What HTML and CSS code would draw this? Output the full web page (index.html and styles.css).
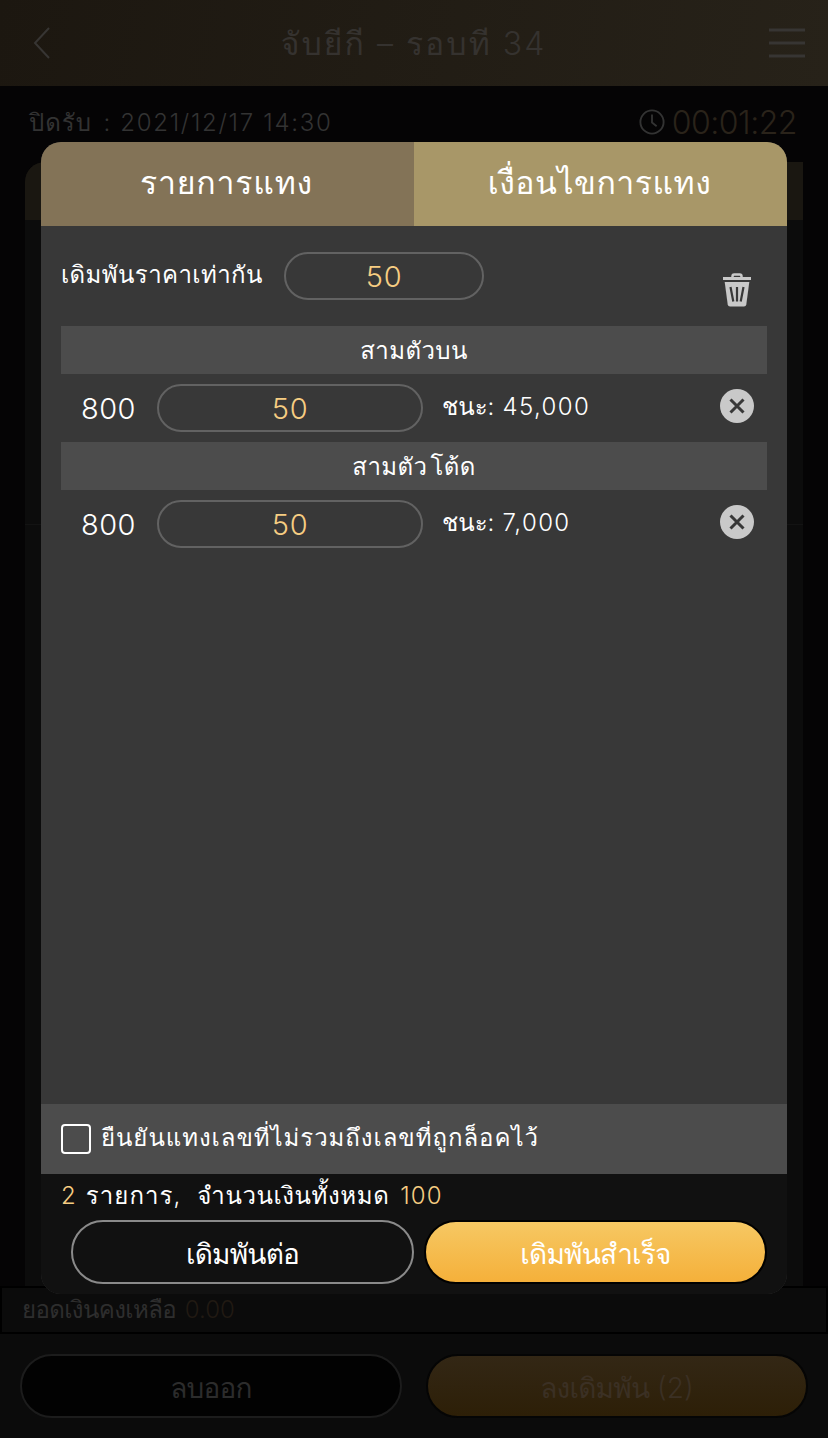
FILE: index.html
```html
<!DOCTYPE html>
<html lang="th">

<head>
    <meta charset="UTF-8">
    <meta name="viewport" content="width=device-width, initial-scale=1.0">
    <title>จับยีกี</title>
    <link rel="stylesheet" href="styles.css">
</head>

<body>
    <div class="page">
        <header class="header">
            <svg class="back" width="20" height="34" viewBox="0 0 20 34"><path d="M17 2 L3 17 L17 32" /></svg>
            <h1 class="title">จับยีกี – รอบที 34</h1>
            <svg class="menu" width="38" height="32" viewBox="0 0 38 32"><path d="M1 3H37M1 16H37M1 29H37" /></svg>
        </header>
        <div class="info">
            <span class="close-time"><span class="close-label">ปิดรับ</span> : 2021/12/17 14:30</span>
            <span class="timer">
                <svg width="26" height="26" viewBox="0 0 28 28"><circle cx="14" cy="14" r="12.5" /><path d="M14 6V14.5L19 18.5" /></svg>
                <span class="countdown">00:01:22</span>
            </span>
        </div>
        <div class="board">
            <div class="board-head"></div>
            <div class="board-row"></div>
        </div>
        <div class="balance"><span class="balance-label">ยอดเงินคงเหลือ</span> <span class="balance-value">0.00</span></div>
        <div class="actions">
            <button class="btn clear"><span>ลบออก</span></button>
            <button class="btn submit"><span>ลงเดิมพัน</span> (2)</button>
        </div>
    </div>

    <div class="modal">
        <div class="tabs">
            <div class="tab active">รายการแทง</div>
            <div class="tab">เงื่อนไขการแทง</div>
        </div>
        <div class="content">
            <div class="same-price">
                <span class="same-label">เดิมพันราคาเท่ากัน</span>
                <div class="input small">50</div>
                <svg class="trash" width="28" height="34" viewBox="0 0 28 34">
                    <path class="handle" d="M9.5 5V3.200Q9.5 1.500 11.200 1.500H16.800Q18.500 1.500 18.500 3.200V5" />
                    <path d="M0 4H28V7H0Z" />
                    <path d="M1.700 9H26.300L23.300 31.500Q23 33.500 21 33.500H7Q5 33.500 4.700 31.500Z" />
                    <path class="slot" d="M7.500 14L10.300 28.500M14 14V28.500M20.500 14L17.700 28.500" />
                </svg>
            </div>
            <div class="group">สามตัวบน</div>
            <div class="bet">
                <span class="number">800</span>
                <div class="input">50</div>
                <span class="win"><span class="win-label">ชนะ:</span> 45,000</span>
                <svg class="remove" width="34" height="34" viewBox="0 0 34 34"><circle cx="17" cy="17" r="17" /><path d="M10.500 10.500L23.500 23.500M23.500 10.500L10.500 23.500" /></svg>
            </div>
            <div class="group">สามตัว<span class="tod">โต้ด</span></div>
            <div class="bet">
                <span class="number">800</span>
                <div class="input">50</div>
                <span class="win"><span class="win-label">ชนะ:</span> 7,000</span>
                <svg class="remove" width="34" height="34" viewBox="0 0 34 34"><circle cx="17" cy="17" r="17" /><path d="M10.500 10.500L23.500 23.500M23.500 10.500L10.500 23.500" /></svg>
            </div>
        </div>
        <div class="confirm">
            <span class="checkbox"></span>
            <span class="confirm-label">ยืนยันแทงเลขที่ไม่รวมถึงเลขที่ถูกล็อคไว้</span>
        </div>
        <div class="footer">
            <div class="summary">
                <span class="gold">2</span>
                <span class="sum-items">รายการ,</span>
                <span class="sum-total">จำนวนเงินทั้งหมด</span>
                <span class="gold">100</span>
            </div>
            <div class="buttons">
                <button class="btn outline"><span>เดิมพันต่อ</span></button>
                <button class="btn primary"><span>เดิมพันสำเร็จ</span></button>
            </div>
        </div>
    </div>
</body>

</html>
```
FILE: styles.css
```css
* {
    box-sizing: border-box;
}

body {
    margin: 0;
    height: 1438px;
    overflow: hidden;
    background-color: #050405;
    font-family: Inter, Loma, "Noto Sans Thai Looped", "Noto Sans", sans-serif;
    font-weight: 350;
    color: #fff;
    white-space: nowrap;
}

svg {
    display: block;
    flex: none;
}

.page {
    height: 1438px;
    display: flex;
    flex-direction: column;
}

/* header */
.header {
    height: 86px;
    flex: none;
    display: flex;
    align-items: center;
    justify-content: space-between;
    padding: 0 22px 0 32px;
    background: linear-gradient(100deg, #1c1710, #272219);
    color: #35322f;
}

.back,
.menu {
    fill: none;
    stroke: #373533;
    stroke-width: 3;
}

.back {
    stroke-width: 2;
}

.title {
    margin: 0 0 0 7px;
    font-size: 32px;
    font-weight: 350;
    letter-spacing: 2px;
}

.info {
    height: 76px;
    flex: none;
    display: flex;
    justify-content: space-between;
    align-items: center;
    padding: 0 31px 3px 29px;
    color: #333;
}

.close-time {
    font-size: 24px;
    letter-spacing: 1.7px;
}

.close-label {
    margin-right: 3px;
    letter-spacing: 1px;
}

.timer {
    display: flex;
    align-items: center;
    gap: 7px;
}

.timer svg {
    margin-bottom: 2px;
    fill: none;
    stroke: #333;
    stroke-width: 2;
}

.countdown {
    font-size: 32px;
    font-weight: 300;
    letter-spacing: -0.5px;
    color: #2a231a;
}

.board {
    flex: 1;
    margin: 0 25px;
    background-color: #0c0c0c;
    border-radius: 20px 0 0 0;
    overflow: hidden;
}

.board-head {
    height: 58px;
    background-color: #1a1711;
}

.board-row {
    height: 305px;
    border-bottom: 1px solid #131313;
}

.balance {
    height: 48px;
    flex: none;
    padding: 0 20px;
    border: 2px solid #000;
    background-color: #0b0b0b;
    font-size: 24px;
    line-height: 44px;
    color: #2e2e2e;
}

.balance-label {
    margin-right: 2px;
    letter-spacing: -0.6px;
}

.balance-value {
    color: #211a13;
}

.actions {
    height: 104px;
    flex: none;
    display: flex;
    gap: 24px;
    padding: 20px 20px 0;
    background-color: #0b0b0b;
}

.btn {
    height: 64px;
    padding: 4px 0 0;
    border: 2px solid #8a8a8a;
    border-radius: 32px;
    background-color: transparent;
    color: #fff;
    font: inherit;
    font-size: 28px;
}

.btn span {
    letter-spacing: -0.8px;
}

.clear {
    width: 382px;
    border-color: #1c1c1c;
    background-color: #020202;
    color: #2c2c2c;
}

.submit {
    width: 382px;
    border-color: #050505;
    background: linear-gradient(#332715, #2d1f07);
    color: #3b3024;
}

/* modal */
.modal {
    position: absolute;
    left: 41px;
    top: 142px;
    width: 746px;
    height: 1152px;
    display: flex;
    flex-direction: column;
    border-radius: 20px;
    overflow: hidden;
    background-color: #383838;
}

.tabs {
    height: 84px;
    flex: none;
    display: flex;
}

.tab {
    width: 50%;
    padding-right: 2px;
    background-color: #a89768;
    font-size: 32px;
    line-height: 81px;
    text-align: center;
    letter-spacing: 0.5px;
}

.tab.active {
    background-color: #837357;
    letter-spacing: 0.8px;
}

.content {
    flex: 1;
    padding: 0 20px;
}

.same-price {
    height: 100px;
    display: flex;
    align-items: center;
}

.same-label {
    width: 223px;
    padding-bottom: 3px;
    font-size: 24px;
    letter-spacing: 0.4px;
}

.input {
    width: 266px;
    height: 48px;
    border: 2px solid #626262;
    border-radius: 24px;
    color: #f6cd82;
    font-size: 29px;
    line-height: 45px;
    text-align: center;
    letter-spacing: 0.8px;
}

.input.small {
    width: 200px;
}

.trash {
    margin: 27px 16px 0 auto;
    fill: #c9c9c9;
}

.trash .handle {
    fill: none;
    stroke: #c9c9c9;
    stroke-width: 2.5;
}

.trash .slot {
    stroke: #383838;
    stroke-width: 2.2;
}

.group {
    height: 48px;
    background-color: #4c4c4c;
    font-size: 24px;
    line-height: 49px;
    text-align: center;
    letter-spacing: 0.4px;
}

.tod {
    margin-left: 3px;
}

.bet {
    height: 68px;
    display: flex;
    align-items: center;
    padding: 0 13px 0 20px;
}

.number {
    width: 76px;
    font-size: 29px;
    letter-spacing: 0.4px;
}

.win {
    margin: 0 auto 3px 19px;
    font-size: 24px;
    letter-spacing: 1.4px;
}

.win-label {
    letter-spacing: 0;
}

.remove {
    margin-bottom: 4px;
    fill: #c9c9c9;
}

.remove path {
    stroke: #383838;
    stroke-width: 3;
}

.confirm {
    height: 70px;
    flex: none;
    display: flex;
    align-items: center;
    gap: 10px;
    padding: 0 20px;
    background-color: #4c4c4c;
    font-size: 24px;
    letter-spacing: 0.95px;
}

.confirm-label {
    padding-bottom: 4px;
}

.checkbox {
    width: 30px;
    height: 30px;
    border: 2px solid #fff;
    border-radius: 4px;
}

.footer {
    height: 120px;
    flex: none;
    background-color: #111;
}

.summary {
    height: 46px;
    padding-left: 20px;
    font-size: 24px;
    line-height: 44px;
}

.sum-items {
    margin: 0 9px 0 2px;
    letter-spacing: 1.1px;
}

.sum-total {
    margin-right: 4px;
    letter-spacing: 0.6px;
}

.gold {
    color: #f6cd82;
    letter-spacing: 1.2px;
}

.buttons {
    display: flex;
    gap: 10px;
    padding: 0 20px 0 30px;
}

.outline {
    width: 343px;
}

.primary {
    width: 343px;
    border-color: #000;
    background: linear-gradient(#f6c863, #f5b03a);
}
```
